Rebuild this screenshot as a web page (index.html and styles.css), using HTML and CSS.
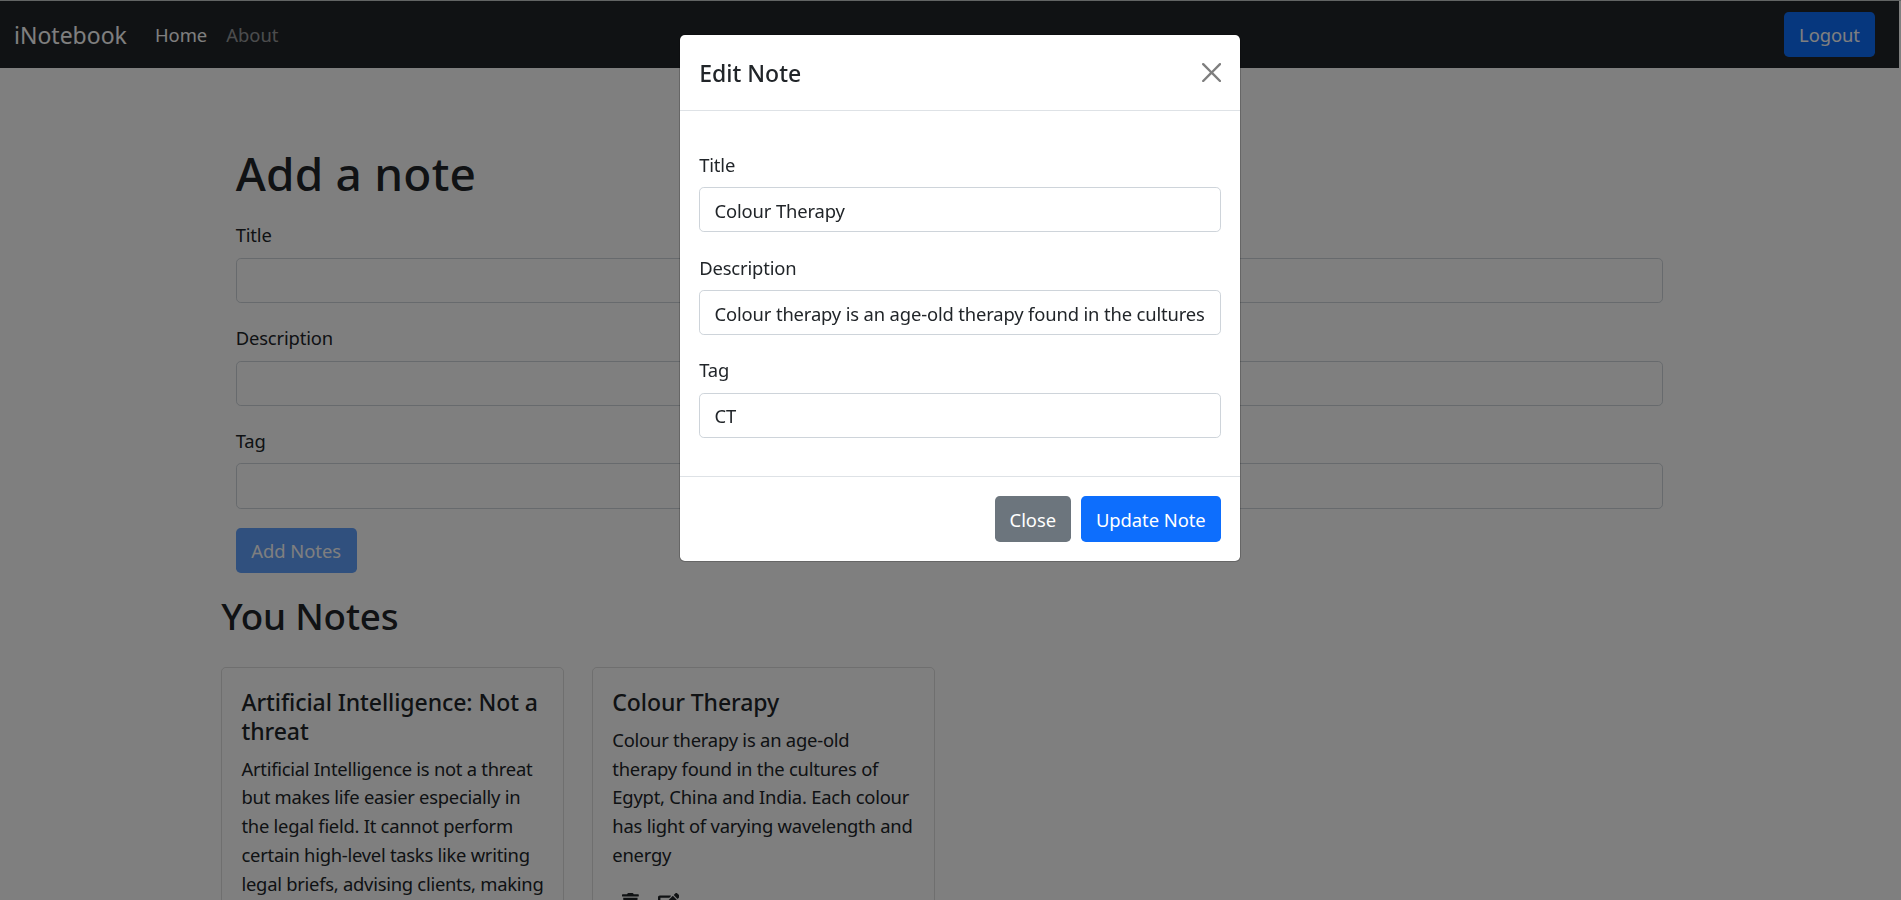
FILE: index.html
```
<!DOCTYPE html>
<html lang="en">
<head>
<meta charset="utf-8">
<title>iNotebook</title>
<link rel="stylesheet" href="styles.css">
</head>
<body>
<div class="page">
  <nav class="navbar">
    <a class="brand">iNotebook</a>
    <a class="nav-link active">Home</a>
    <a class="nav-link">About</a>
    <button class="btn btn-primary logout">Logout</button>
  </nav>
  <main class="container">
    <section class="add-note">
      <h1>Add a note</h1>
      <form>
        <div class="field"><label for="title">Title</label><input id="title" type="text"></div>
        <div class="field"><label for="description">Description</label><input id="description" type="text"></div>
        <div class="field"><label for="tag">Tag</label><input id="tag" type="text"></div>
        <button class="btn btn-primary" type="button" disabled>Add Notes</button>
      </form>
    </section>
    <h2>You Notes</h2>
    <section class="notes">
      <article class="card">
        <h5>Artificial Intelligence: Not a threat</h5>
        <p>Artificial Intelligence is not a threat but makes life easier especially in the legal field. It cannot perform certain high-level tasks like writing legal briefs, advising clients, making</p>
      </article>
      <article class="card">
        <h5>Colour Therapy</h5>
        <p>Colour therapy is an age-old therapy found in the cultures of Egypt, China and India. Each colour has light of varying wavelength and energy</p>
        <div class="actions">
          <svg class="trash" viewBox="0 0 448 512"><path d="M432 32H312l-9.4-18.7A24 24 0 0 0 281.1 0H166.8a23.72 23.72 0 0 0-21.4 13.3L136 32H16A16 16 0 0 0 0 48v32a16 16 0 0 0 16 16h416a16 16 0 0 0 16-16V48a16 16 0 0 0-16-16zM53.2 467a48 48 0 0 0 47.9 45h245.8a48 48 0 0 0 47.9-45L416 128H32z"/></svg>
          <svg class="edit" viewBox="0 0 576 512"><path d="M402.6 83.2l90.2 90.2c3.8 3.8 3.8 10 0 13.8L274.4 405.6l-92.8 10.3c-12.4 1.4-22.9-9.1-21.5-21.5l10.3-92.8L388.8 83.2c3.8-3.8 10-3.8 13.8 0zm162-22.9l-48.8-48.8c-15.2-15.2-39.9-15.2-55.2 0l-35.4 35.4c-3.8 3.8-3.8 10 0 13.8l90.2 90.2c3.8 3.8 10 3.8 13.8 0l35.4-35.4c15.2-15.3 15.2-40 0-55.2zM384 346.2V448H64V128h229.8c3.2 0 6.2-1.3 8.5-3.5l40-40c7.6-7.6 2.2-20.5-8.5-20.5H48C21.5 64 0 85.5 0 112v352c0 26.5 21.5 48 48 48h352c26.5 0 48-21.5 48-48V306.2c0-10.7-12.9-16-20.5-8.5l-40 40c-2.2 2.3-3.5 5.3-3.5 8.5z"/></svg>
        </div>
      </article>
    </section>
  </main>
</div>
<div class="backdrop">
  <div class="modal" role="dialog">
    <header class="modal-header">
      <h5>Edit Note</h5>
      <svg class="close" viewBox="0 0 16 16"><path d="M.293.293a1 1 0 0 1 1.414 0L8 6.586 14.293.293a1 1 0 1 1 1.414 1.414L9.414 8l6.293 6.293a1 1 0 0 1-1.414 1.414L8 9.414l-6.293 6.293a1 1 0 0 1-1.414-1.414L6.586 8 .293 1.707a1 1 0 0 1 0-1.414z"/></svg>
    </header>
    <form class="modal-body">
      <div class="field"><label for="etitle">Title</label><input id="etitle" type="text" value="Colour Therapy"></div>
      <div class="field"><label for="edescription">Description</label><input id="edescription" type="text" value="Colour therapy is an age-old therapy found in the cultures"></div>
      <div class="field"><label for="etag">Tag</label><input id="etag" type="text" value="CT"></div>
    </form>
    <footer class="modal-footer">
      <button class="btn btn-secondary">Close</button>
      <button class="btn btn-primary">Update Note</button>
    </footer>
  </div>
</div>
</body>
</html>
```
FILE: styles.css
```
* { box-sizing: border-box; }
html, body { height: 100%; overflow: hidden; }
body {
  margin: 0;
  background: #fff;
  color: #212529;
  font-family: "Noto Sans", "Open Sans", sans-serif;
  font-size: 18.4px;
  line-height: 28.8px;
  letter-spacing: -0.15px;
}
h1, h2, h5, p { margin: 0; }
h1, h2, h5 { font-weight: 500; }
.page { height: 100%; overflow: hidden; border-top: 1px solid #c4c8c8; padding-right: 2px; }

.navbar {
  display: flex;
  align-items: center;
  height: 67px;
  padding: 0 24px 0 14px;
  background: #212529;
  letter-spacing: 0;
}
.brand { color: #fff; font-size: 23px; margin-right: 28px; padding-top: 1px; }
.nav-link { color: rgba(255, 255, 255, .55); margin-right: 19px; padding-top: 1px; }
.nav-link.active { color: #fff; }
.logout { margin-left: auto; width: 91px; }

.btn {
  height: 45.2px;
  padding: 1px 0 0;
  border: 0;
  border-radius: 4.8px;
  color: #fff;
  font: inherit;
  letter-spacing: -0.05px;
  text-align: center;
}
.btn-primary { background: #0d6efd; }
.btn-secondary { background: #6c757d; }
.btn:disabled { opacity: .65; width: 121px; display: block; padding-top: 2px; }

.container { width: 1456.4px; margin: 0 auto; padding-top: 74.6px; }
.add-note { padding: 0 14.4px; }
h1 { font-size: 46px; line-height: 61.6px; letter-spacing: .2px; margin-bottom: 15.2px; }
.field { margin-bottom: 19.2px; }
.field label { display: block; line-height: 31.4px; margin-bottom: 7px; }
.field input {
  display: block;
  width: 100%;
  height: 45.2px;
  padding: 1px 14.4px 0;
  border: 1px solid #ced4da;
  border-radius: 4.8px;
  background: #fff;
  color: #212529;
  font: inherit;
  letter-spacing: inherit;
}
h2 { font-size: 36.8px; line-height: 49.2px; letter-spacing: -.2px; margin: 18.9px 0 26px; }

.notes { display: grid; grid-template-columns: repeat(4, 1fr); gap: 28.8px; align-items: start; }
.card { height: 400px; padding: 20.2px 19.2px; border: 1px solid rgba(0, 0, 0, .125); border-radius: 4.8px; letter-spacing: -.26px; }
.card:nth-child(2) { letter-spacing: -.22px; margin-left: -.5px; }
.card h5 { font-size: 23px; letter-spacing: -.08px; margin-bottom: 8.8px; }
.card p { margin-right: -3px; }
.actions { display: flex; gap: 19.2px; padding: 23.3px 0 0 9.6px; }
.actions svg { height: 19.2px; fill: #212529; }
.trash { width: 16.8px; }
.edit { width: 21.6px; }

.backdrop { position: fixed; inset: 0; background: rgba(0, 0, 0, .5); }
.modal {
  width: 562px;
  margin: 34px 0 0 679px;
  border: 1px solid rgba(0, 0, 0, .2);
  border-radius: 5.8px;
  background: #fff;
  background-clip: padding-box;
}
.modal-header {
  display: flex;
  align-items: center;
  justify-content: space-between;
  height: 76px;
  padding: 0 19.2px;
  border-bottom: 1px solid #dee2e6;
}
.modal-header h5 { font-size: 23px; letter-spacing: 0; padding-top: 1px; }
.close { width: 19.2px; height: 19.2px; opacity: .5; }
.modal-body { padding: 37.8px 19.2px 18.6px; }
.modal-footer {
  display: flex;
  justify-content: flex-end;
  gap: 10px;
  padding: 19.2px;
  border-top: 1px solid #dee2e6;
}
.modal-footer .btn { height: 46px; padding-top: 3px; }
.modal-footer .btn-secondary { width: 76px; }
.modal-footer .btn-primary { width: 140px; }
```
